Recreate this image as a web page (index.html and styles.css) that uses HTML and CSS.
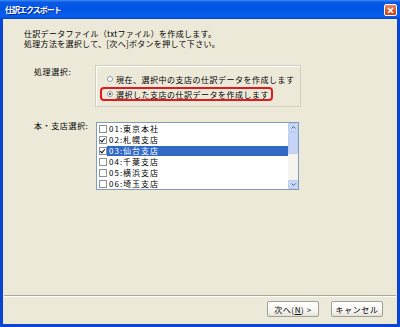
FILE: index.html
```html
<!DOCTYPE html>
<html lang="ja">
<head>
  <meta charset="UTF-8" />
  <title>仕訳エクスポート</title>
  <link rel="stylesheet" href="styles.css">
</head>
<body>
  <div class="window">
    <!-- Title bar -->
    <div class="titlebar">
      <span class="title">仕訳エクスポート</span>
      <span class="close">
        <svg width="7" height="7" viewBox="0 0 7 7"><path d="M1 1 L6 6 M6 1 L1 6" stroke="#fff" stroke-width="1.6"/></svg>
      </span>
    </div>

    <div class="content">
      <p class="intro">仕訳データファイル（txtファイル）を作成します。<br>処理方法を選択して、[次へ]ボタンを押して下さい。</p>

      <!-- Mode selection -->
      <div class="field field-mode">
        <span class="field-label">処理選択:</span>
        <div class="option-panel">
          <label class="option"><span class="radio"></span>現在、選択中の支店の仕訳データを作成します</label>
          <label class="option option-marked"><span class="radio checked"></span>選択した支店の仕訳データを作成します</label>
        </div>
      </div>

      <!-- Branch list -->
      <div class="field field-branch">
        <span class="field-label">本・支店選択:</span>
        <div class="listbox">
          <ul class="list-items">
            <li><span class="check"></span><span class="item-text">01:東京本社</span></li>
            <li><span class="check checked"></span><span class="item-text">02:札幌支店</span></li>
            <li class="selected"><span class="check checked"></span><span class="item-text">03:仙台支店</span></li>
            <li><span class="check"></span><span class="item-text">04:千葉支店</span></li>
            <li><span class="check"></span><span class="item-text">05:横浜支店</span></li>
            <li><span class="check"></span><span class="item-text">06:埼玉支店</span></li>
          </ul>
          <div class="scrollbar">
            <span class="scroll-btn">
              <svg width="5" height="3" viewBox="0 0 5 3"><path d="M0.5 2.5 L2.5 0.5 L4.5 2.5" fill="none" stroke="#4d6185" stroke-width="1"/></svg>
            </span>
            <span class="scroll-thumb"></span>
            <span class="scroll-track"></span>
            <span class="scroll-btn">
              <svg width="5" height="3" viewBox="0 0 5 3"><path d="M0.5 0.5 L2.5 2.5 L4.5 0.5" fill="none" stroke="#4d6185" stroke-width="1"/></svg>
            </span>
          </div>
        </div>
      </div>

      <!-- Footer -->
      <div class="footer">
        <div class="separator"></div>
        <div class="buttons">
          <button class="btn">次へ(<u>N</u>) &gt;</button>
          <button class="btn">キャンセル</button>
        </div>
      </div>
    </div>
  </div>
</body>
</html>
```

FILE: styles.css
```css
body {
  margin: 0;
  font-family: "Noto Sans CJK JP", "Noto Sans", sans-serif;
  font-size: 8px;
  color: #000;
  background: #ece9d8;
}

.window {
  width: 400px;
  height: 327px;
  display: flex;
  flex-direction: column;
}

/* Title bar */
.titlebar {
  height: 19px;
  flex-shrink: 0;
  display: flex;
  align-items: center;
  justify-content: space-between;
  padding: 0 3px 0 5px;
  background: linear-gradient(#3d8af7 0%, #0a5ae6 12%, #0055e5 45%, #0a5ff0 85%, #0046cf 100%);
}
.title {
  color: #fff;
  font-weight: bold;
  font-size: 8px;
  letter-spacing: -1px;
  text-shadow: 1px 1px 0 #0a2a8a;
}
.close {
  width: 11px;
  height: 10px;
  margin-top: 1px;
  display: flex;
  justify-content: center;
  align-items: center;
  border: 1px solid #fff;
  border-radius: 2px;
  background: linear-gradient(#e88a6c, #d8532c 60%, #c8401c);
}

/* Main area */
.content {
  flex: 1;
  display: flex;
  flex-direction: column;
  background: #ece9d8;
  border: 3px solid #0845d6;
  border-top: 0;
}

.intro {
  margin: 10px 0 0 21px;
  line-height: 10px;
  letter-spacing: 0.3px;
}

.field {
  display: flex;
  align-items: flex-start;
  padding-left: 31px;
}
.field-label {
  width: 61px;
  line-height: 10px;
  letter-spacing: 0.6px;
}
.field-mode {
  margin-top: 16px;
}
.field-mode .field-label {
  padding-top: 2px;
}
.field-branch {
  margin-top: 15px;
}
.field-branch .field-label {
  margin-top: -1px;
}

/* Radio options */
.option-panel {
  width: 206px;
  height: 42px;
  box-sizing: border-box;
  border: 1px solid #d3d0c0;
  box-shadow: inset 1px 1px 0 #fff;
  display: flex;
  flex-direction: column;
  align-items: flex-start;
  gap: 1px;
  padding: 6px 0 0 4px;
}
.option {
  display: flex;
  align-items: center;
  height: 14px;
  box-sizing: border-box;
  padding: 0 2px 0 5px;
  border: 2px solid transparent;
  letter-spacing: 0.5px;
  white-space: nowrap;
}
.option-marked {
  border-color: #e3191f;
  border-radius: 4px;
}
.radio {
  width: 6px;
  height: 6px;
  margin-right: 3px;
  border: 1px solid #8f9aa8;
  border-radius: 50%;
  background: #fff;
  box-sizing: border-box;
  display: flex;
  justify-content: center;
  align-items: center;
}
.radio.checked::after {
  content: "";
  width: 2px;
  height: 2px;
  border-radius: 50%;
  background: #2b2b2b;
}

/* List box */
.listbox {
  width: 203px;
  height: 68px;
  box-sizing: border-box;
  border: 1px solid #7f9db9;
  background: #fff;
  display: flex;
  margin-left: 1px;
}
.list-items {
  flex: 1;
  margin: 0;
  padding: 0;
  list-style: none;
}
.list-items li {
  height: 11px;
  display: flex;
  align-items: center;
  padding-left: 2px;
}
.check {
  width: 8px;
  height: 8px;
  box-sizing: border-box;
  border: 1px solid #8c9099;
  background: #fff;
  position: relative;
}
.check.checked::after {
  content: "";
  position: absolute;
  left: 1px;
  top: 0;
  width: 2px;
  height: 4px;
  border: solid #111;
  border-width: 0 1.5px 1.5px 0;
  transform: rotate(40deg);
}
.item-text {
  flex: 1;
  height: 10px;
  line-height: 10px;
  padding-left: 2px;
  letter-spacing: 1px;
}
.selected .item-text {
  background: #316ac5;
  color: #fff;
}

.scrollbar {
  width: 10px;
  display: flex;
  flex-direction: column;
  background: #f5f4ee;
}
.scroll-btn {
  height: 9px;
  box-sizing: border-box;
  border: 1px solid #bccdf0;
  border-radius: 1px;
  background: #c9d8f6;
  display: flex;
  justify-content: center;
  align-items: center;
}
.scroll-thumb {
  height: 22px;
  box-sizing: border-box;
  border: 1px solid #bccdf0;
  border-radius: 1px;
  background: #c6d5f7;
}
.scroll-track {
  flex: 1;
}

/* Footer */
.footer {
  margin-top: auto;
  padding-bottom: 7px;
}
.separator {
  height: 1px;
  border-top: 1px solid #aca899;
  background: #fff;
  margin: 0 1px;
}
.buttons {
  display: flex;
  justify-content: flex-end;
  gap: 12px;
  padding: 4px 14px 0 0;
}
.btn {
  width: 52px;
  height: 16px;
  padding: 0;
  font-family: inherit;
  font-size: 8px;
  letter-spacing: 0.6px;
  color: #000;
  border: 1px solid #a2a096;
  border-radius: 2px;
  background: linear-gradient(#ffffff, #f4f3ee 70%, #e3e1d8);
}
```
